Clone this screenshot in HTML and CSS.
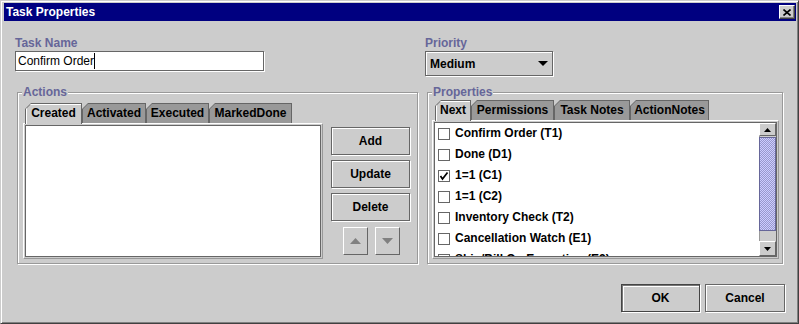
FILE: index.html
```html
<!DOCTYPE html>
<html lang="en">
<head>
    <meta charset="UTF-8">
    <title>Task Properties</title>
    <link rel="stylesheet" href="styles.css">
</head>
<body>

<div class="window">

    <!-- Title bar -->
    <div class="titlebar">
        <span class="title">Task Properties</span>
        <div class="close">
            <svg width="8" height="7" viewBox="0 0 8 7"><path d="M0.5 0.5 L7.5 6.5 M7.5 0.5 L0.5 6.5" stroke="#000" stroke-width="1.6"/></svg>
        </div>
    </div>

    <div class="content">

        <!-- Name / priority -->
        <div class="top-row">
            <div class="field">
                <label class="caption">Task Name</label>
                <div class="textbox">Confirm Order<span class="caret"></span></div>
            </div>
            <div class="field">
                <label class="caption">Priority</label>
                <div class="combo">
                    <span>Medium</span>
                    <svg width="10" height="5" viewBox="0 0 10 5"><polygon points="0,0 10,0 5,5" fill="#000"/></svg>
                </div>
            </div>
        </div>

        <div class="mid-row">

            <!-- Actions -->
            <fieldset class="group actions">
                <legend>Actions</legend>
                <div class="group-body">
                    <div class="tabbed">
                        <div class="tabs">
                            <div class="tab selected"><span>Created</span></div>
                            <div class="tab"><span>Activated</span></div>
                            <div class="tab"><span>Executed</span></div>
                            <div class="tab"><span>MarkedDone</span></div>
                        </div>
                        <div class="panel">
                            <div class="list"></div>
                        </div>
                    </div>
                    <div class="side-buttons">
                        <button class="btn">Add</button>
                        <button class="btn">Update</button>
                        <button class="btn">Delete</button>
                        <div class="arrows">
                            <button class="arrow-btn">
                                <svg width="11" height="6" viewBox="0 0 11 6"><polygon points="0,6 11,6 5.5,0" fill="#808080"/></svg>
                            </button>
                            <button class="arrow-btn">
                                <svg width="11" height="6" viewBox="0 0 11 6"><polygon points="0,0 11,0 5.5,6" fill="#808080"/></svg>
                            </button>
                        </div>
                    </div>
                </div>
            </fieldset>

            <!-- Properties -->
            <fieldset class="group props">
                <legend>Properties</legend>
                <div class="group-body">
                    <div class="tabbed">
                        <div class="tabs">
                            <div class="tab selected"><span>Next</span></div>
                            <div class="tab"><span>Permissions</span></div>
                            <div class="tab"><span>Task Notes</span></div>
                            <div class="tab"><span>ActionNotes</span></div>
                        </div>
                        <div class="panel">
                            <div class="list checklist">
                                <div class="rows">
                                    <div class="row"><span class="check"></span>Confirm Order (T1)</div>
                                    <div class="row"><span class="check"></span>Done (D1)</div>
                                    <div class="row"><span class="check on"><svg width="10" height="10" viewBox="0 0 10 10"><path d="M1.5 5 L3.5 8 L8.5 1.5" fill="none" stroke="#000" stroke-width="1.7"/></svg></span>1=1 (C1)</div>
                                    <div class="row"><span class="check"></span>1=1 (C2)</div>
                                    <div class="row"><span class="check"></span>Inventory Check (T2)</div>
                                    <div class="row"><span class="check"></span>Cancellation Watch (E1)</div>
                                    <div class="row"><span class="check"></span>Ship/Bill On Exception (E2)</div>
                                </div>
                                <div class="scrollbar">
                                    <div class="sb-btn">
                                        <svg width="7" height="4" viewBox="0 0 7 4"><polygon points="0,4 7,4 3.5,0" fill="#000"/></svg>
                                    </div>
                                    <div class="sb-track"><div class="sb-thumb"></div></div>
                                    <div class="sb-btn down">
                                        <svg width="7" height="4" viewBox="0 0 7 4"><polygon points="0,0 7,0 3.5,4" fill="#000"/></svg>
                                    </div>
                                </div>
                            </div>
                        </div>
                    </div>
                </div>
            </fieldset>
        </div>

        <!-- Dialog buttons -->
        <div class="footer">
            <button class="btn default">OK</button>
            <button class="btn cancel">Cancel</button>
        </div>
    </div>
</div>

</body>
</html>
```

FILE: styles.css
```css
body {
    margin: 0;
    background-color: #cccccc;
    font-family: "Liberation Sans", Arial, sans-serif;
    font-size: 12px;
    color: #000000;
}

.window {
    width: 799px;
    height: 324px;
    box-sizing: border-box;
    border: 1px solid;
    border-color: #cccccc #404040 #404040 #cccccc;
    box-shadow: inset 1px 1px #ffffff, inset -1px -1px #808080;
    padding: 2px 2px 2px 3px;
    background-color: #cccccc;
    display: flex;
    flex-direction: column;
}

/* title bar */
.titlebar {
    height: 18px;
    background-color: #000080;
    color: #ffffff;
    font-weight: bold;
    line-height: 18px;
    display: flex;
    align-items: center;
    padding-left: 2px;
}

.close {
    margin-left: auto;
    margin-right: 1px;
    width: 16px;
    height: 14px;
    box-sizing: border-box;
    border: 1px solid;
    border-color: #ffffff #404040 #404040 #ffffff;
    box-shadow: inset -1px -1px #808080;
    background-color: #cccccc;
    display: flex;
    align-items: center;
    justify-content: center;
}

.content {
    flex: 1;
    padding: 15px 11px 0 11px;
}

/* top row */
.top-row, .mid-row {
    display: grid;
    grid-template-columns: 410px 1fr;
}

.top-row {
    height: 41px;
}

.caption {
    display: block;
    line-height: 14px;
    font-weight: bold;
    color: #666699;
}

.textbox {
    margin-top: 1px;
    width: 249px;
    height: 20px;
    box-sizing: border-box;
    border: 1px solid #666666;
    box-shadow: 1px 1px #ffffff;
    background-color: #ffffff;
    padding-left: 2px;
    line-height: 18px;
}

.caret {
    display: inline-block;
    width: 1px;
    height: 16px;
    background-color: #000000;
    vertical-align: -4px;
}

.combo {
    margin-top: 1px;
    width: 128px;
    height: 25px;
    box-sizing: border-box;
    border: 1px solid #666666;
    box-shadow: inset 1px 1px #ffffff, 1px 1px #ffffff;
    padding: 0 4px 0 4px;
    display: flex;
    align-items: center;
    justify-content: space-between;
    font-weight: bold;
}

/* titled groups */
.mid-row {
    margin-top: 8px;
}

.group {
    margin: 0 0 0 2px;
    min-width: 0;
    height: 179px;
    box-sizing: border-box;
    border: 1px solid #999999;
    box-shadow: inset 1px 1px #ffffff, 1px 1px #ffffff;
}

.group legend {
    padding: 0 1px;
    line-height: 14px;
    font-weight: bold;
    color: #666699;
    background-color: #cccccc;
}

.actions {
    width: 401px;
    padding: 4px 0 0 5px;
}

.actions legend {
    margin-left: -1px;
}

.props {
    width: 356px;
    padding: 1px 0 0 4px;
}

.group-body {
    display: flex;
}

/* tabs */
.tabs {
    display: flex;
    margin-left: 2px;
    height: 20px;
    position: relative;
    z-index: 1;
}

.props .tabs {
    margin-left: 3px;
}

.tab {
    height: 20px;
    box-sizing: border-box;
    background-color: #666666;
    padding: 1px 1px 0 1px;
    clip-path: polygon(0 6px, 6px 0, 100% 0, 100% 100%, 0 100%);
}

.tab span {
    display: block;
    height: 100%;
    background-color: #999999;
    clip-path: polygon(0 5px, 5px 0, 100% 0, 100% 100%, 0 100%);
    text-align: center;
    line-height: 19px;
    font-weight: bold;
}

.tab.selected {
    height: 21px;
    margin-bottom: -1px;
}

.tab.selected span {
    background-color: #cccccc;
    box-shadow: inset 1px 1px #ffffff;
}

.actions .tab:nth-child(1) { width: 57px; }
.actions .tab:nth-child(2) { width: 64px; }
.actions .tab:nth-child(3) { width: 63px; }
.actions .tab:nth-child(4) { width: 83px; }

.props .tab:nth-child(1) { width: 36px; }
.props .tab:nth-child(2) { width: 83px; }
.props .tab:nth-child(3) { width: 76px; }
.props .tab:nth-child(4) { width: 79px; }

.panel {
    box-sizing: border-box;
    border: 1px solid;
    border-color: #ffffff #999999 #999999 #ffffff;
    padding: 1px;
    display: flex;
}

.actions .panel {
    width: 300px;
    height: 136px;
}

.props .panel {
    width: 347px;
    height: 139px;
}

.list {
    flex: 1;
    border: 1px solid #666666;
    background-color: #ffffff;
}

/* action buttons */
.side-buttons {
    margin-left: 8px;
    padding-top: 24px;
    width: 80px;
    display: flex;
    flex-direction: column;
    gap: 5px;
}

.btn {
    width: 79px;
    height: 28px;
    box-sizing: border-box;
    border: 1px solid #666666;
    box-shadow: inset 1px 1px #ffffff, 1px 1px #ffffff;
    background-color: #cccccc;
    padding: 0;
    font-family: "Liberation Sans", Arial, sans-serif;
    font-size: 12px;
    font-weight: bold;
    color: #000000;
}

.arrows {
    margin-top: 1px;
    display: flex;
    justify-content: center;
    gap: 7px;
}

.arrow-btn {
    width: 25px;
    height: 28px;
    box-sizing: border-box;
    border: 1px solid;
    border-color: #ffffff #666666 #666666 #ffffff;
    background-color: #cccccc;
    padding: 0;
    display: flex;
    align-items: center;
    justify-content: center;
}

/* checkbox list */
.checklist {
    display: flex;
    overflow: hidden;
}

.rows {
    flex: 1;
    font-weight: bold;
}

.row {
    height: 21px;
    line-height: 21px;
    padding-left: 3px;
    display: flex;
    align-items: center;
    white-space: nowrap;
}

.check {
    width: 12px;
    height: 12px;
    box-sizing: border-box;
    border: 1px solid #666666;
    margin-right: 5px;
    display: flex;
    align-items: center;
    justify-content: center;
}

.scrollbar {
    width: 17px;
    display: flex;
    flex-direction: column;
    background-color: #cccccc;
    box-shadow: inset 1px 0 #999999;
}

.sb-btn {
    height: 13px;
    box-sizing: border-box;
    border: 1px solid;
    border-color: #ffffff #666666 #666666 #ffffff;
    background-color: #cccccc;
    display: flex;
    align-items: center;
    justify-content: center;
}

.sb-btn.down {
    height: 15px;
}

.sb-track {
    flex: 1;
}

.sb-thumb {
    margin-top: 1px;
    height: 94px;
    box-sizing: border-box;
    border: 1px solid #666699;
    background: repeating-conic-gradient(#9999cc 0 25%, #ccccff 0 50%) 0 0 / 2px 2px;
}

/* footer */
.footer {
    margin-top: 20px;
    display: flex;
    justify-content: flex-end;
    gap: 5px;
}

.btn.default {
    border-color: #444444;
    box-shadow: inset 1px 1px #777777, inset 2px 2px #ffffff, 1px 1px #ffffff;
}

.btn.cancel {
    width: 80px;
}
```
